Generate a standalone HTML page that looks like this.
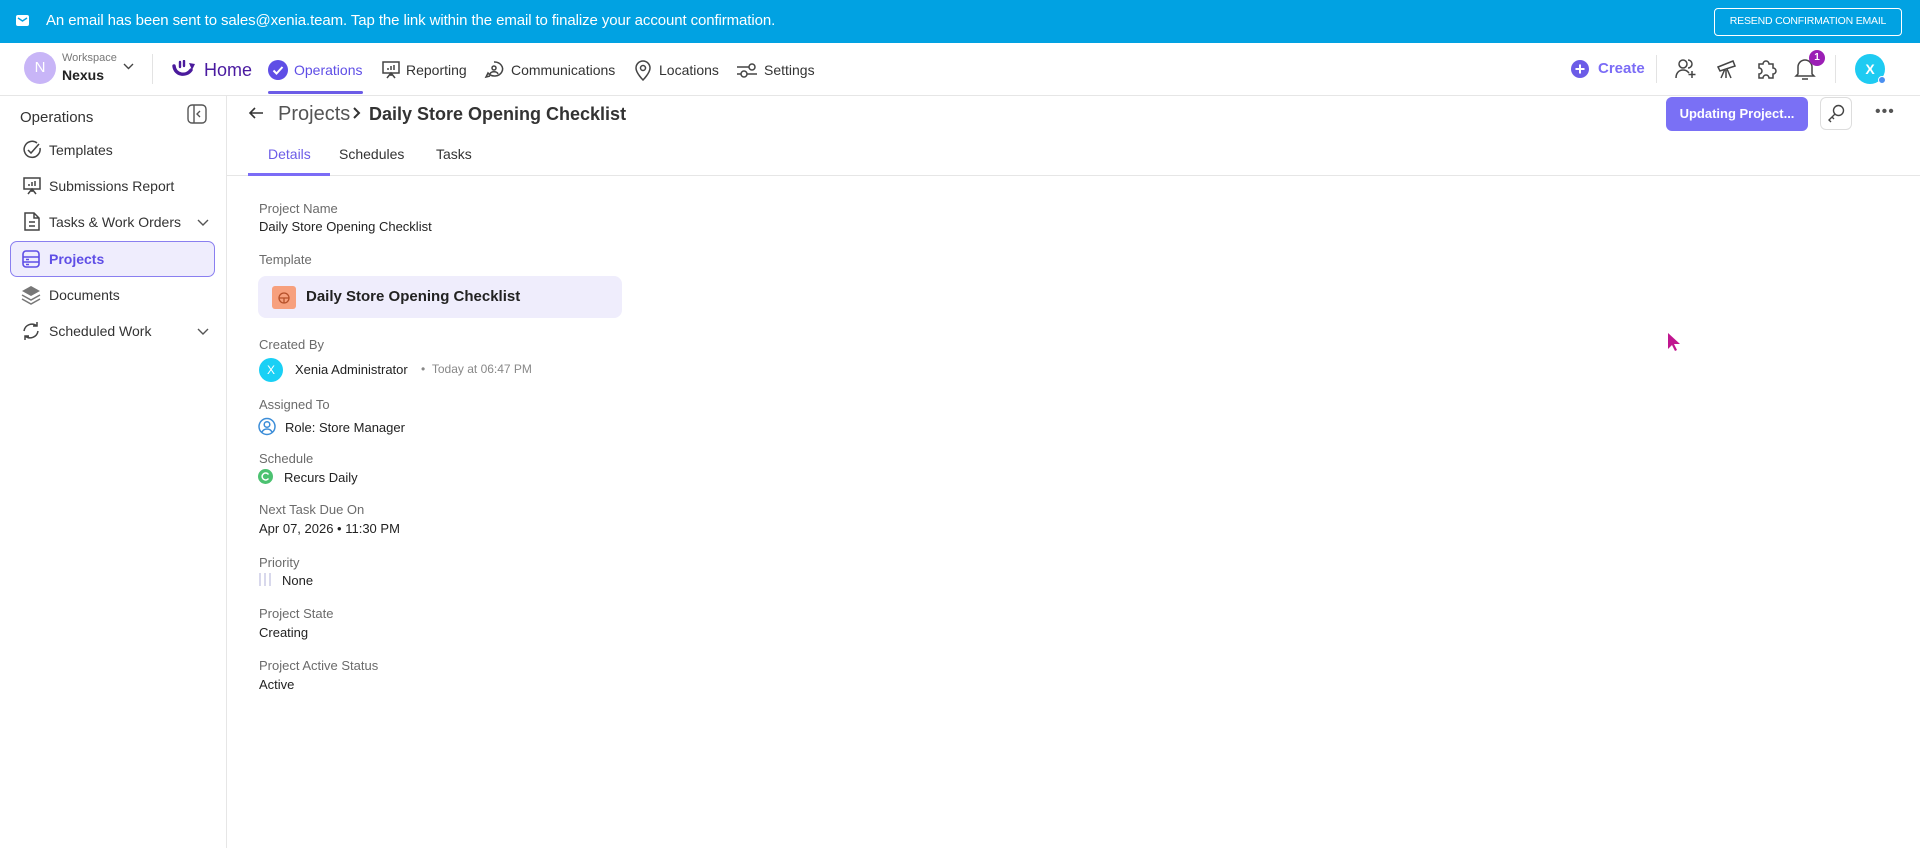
<!DOCTYPE html>
<html><head><meta charset="utf-8"><style>
*{box-sizing:border-box;margin:0;padding:0}
body{width:1920px;height:848px;overflow:hidden;background:#fff;font-family:"Liberation Sans",sans-serif;color:#222;position:relative}
.a{position:absolute;white-space:nowrap}
.banner{position:absolute;left:0;top:0;width:1920px;height:43px;background:#01a2e2}
.lbl{font-size:13px;color:#6b6b6b}
.val{font-size:13px;color:#222}
.side{font-size:14px;color:#333}
.nav{font-size:14px;color:#333}
svg{position:absolute}
</style></head><body>
<div class="banner"></div>
<svg style="left:16px;top:15px" width="13" height="11" viewBox="0 0 13 11"><rect width="13" height="11" rx="2" fill="#fff"/><path d="M2 3l4.5 3L11 3" stroke="#01a2e2" stroke-width="1.4" fill="none"/></svg>
<div class="a" style="left:46px;top:12px;font-size:15px;color:#fff;letter-spacing:-0.1px">An email has been sent to sales@xenia.team. Tap the link within the email to finalize your account confirmation.</div>
<div class="a" style="left:1714px;top:8px;width:188px;height:28px;border:1.5px solid #fff;border-radius:4px;color:#fff;font-size:10.5px;line-height:25px;text-align:center;letter-spacing:-0.2px">RESEND CONFIRMATION EMAIL</div>

<!-- nav -->
<div class="a" style="left:0;top:95px;width:1920px;height:1px;background:#e6e6e6"></div>
<div class="a" style="left:24px;top:52px;width:32px;height:32px;border-radius:50%;background:#c8b5f7;color:#fff;font-size:15px;text-align:center;line-height:32px">N</div>
<div class="a" style="left:62px;top:52px;font-size:11px;color:#777">Workspace</div>
<div class="a" style="left:62px;top:67px;font-size:14px;font-weight:bold;color:#222">Nexus</div>
<svg style="left:123px;top:63px" width="11" height="7"><path d="M1 1l4.5 4.5L10 1" stroke="#444" stroke-width="1.4" fill="none"/></svg>
<div class="a" style="left:152px;top:54px;width:1px;height:30px;background:#e3e3e3"></div>
<svg style="left:171px;top:60px" width="28" height="20" viewBox="0 0 28 20"><path d="M3 6c1 9 12 11 17 4" stroke="#4a1a9c" stroke-width="3.4" fill="none" stroke-linecap="round"/><path d="M18 3l6 1-3 6z" fill="#4a1a9c"/><path d="M9 2v5M13 1v5" stroke="#4a1a9c" stroke-width="2.4" stroke-linecap="round"/></svg>
<div class="a" style="left:204px;top:60px;font-size:18px;color:#4a1aa0">Home</div>
<svg style="left:268px;top:60px" width="20" height="20"><circle cx="10" cy="10" r="10" fill="#5f4ee6"/><path d="M5.5 10.5l3 3 6-6.5" stroke="#fff" stroke-width="2" fill="none"/></svg>
<div class="a nav" style="left:294px;top:62px;color:#5f4ee6">Operations</div>
<div class="a" style="left:268px;top:91px;width:95px;height:3px;background:#6c5ce7;border-radius:2px"></div>
<svg style="left:381px;top:60px" width="20" height="20" fill="none" stroke="#444" stroke-width="1.5"><rect x="2" y="2" width="16" height="11"/><path d="M7 10V8M10 10V6M13 10V5M10 13v3M6 18l4-5 4 5"/></svg>
<div class="a nav" style="left:406px;top:62px">Reporting</div>
<svg style="left:484px;top:60px" width="21" height="21" fill="none" stroke="#444" stroke-width="1.5"><path d="M10 2a8 7 0 1 1-6 11l-2 4 4-1"/><circle cx="10" cy="8" r="2"/><path d="M6 14c1-3 7-3 8 0"/></svg>
<div class="a nav" style="left:511px;top:62px">Communications</div>
<svg style="left:634px;top:59px" width="18" height="22" fill="none" stroke="#444" stroke-width="1.5"><path d="M9 21s-7-7-7-12a7 7 0 0 1 14 0c0 5-7 12-7 12z"/><circle cx="9" cy="9" r="2.5"/></svg>
<div class="a nav" style="left:659px;top:62px">Locations</div>
<svg style="left:736px;top:62px" width="22" height="16" fill="none" stroke="#444" stroke-width="1.5"><path d="M1 5h12M1 12h4"/><circle cx="16" cy="5" r="3"/><circle cx="8" cy="12" r="3"/><path d="M11 12h10"/></svg>
<div class="a nav" style="left:764px;top:62px">Settings</div>

<svg style="left:1571px;top:60px" width="18" height="18"><circle cx="9" cy="9" r="9" fill="#6c5ce7"/><path d="M9 4.5v9M4.5 9h9" stroke="#fff" stroke-width="2"/></svg>
<div class="a" style="left:1598px;top:60px;font-size:15px;font-weight:bold;color:#7b6cf6">Create</div>
<div class="a" style="left:1656px;top:55px;width:1px;height:28px;background:#e3e3e3"></div>
<svg style="left:1675px;top:58px" width="22" height="22" fill="none" stroke="#444" stroke-width="1.5"><circle cx="8" cy="6" r="4"/><path d="M1 20c0-5 3-8 7-8s5 2 6 3M17 13v7M13.5 16.5h7M13 2a4 4 0 0 1 0 8"/></svg>
<svg style="left:1715px;top:57px" width="24" height="24" fill="none" stroke="#444" stroke-width="1.5"><path d="M3 10l15-6 2 5-15 5zM10 12l-4 9M12 12l4 9M11 13v8"/></svg>
<svg style="left:1755px;top:57px" width="22" height="22" fill="none" stroke="#444" stroke-width="1.5"><path d="M4 7h4a3 3 0 1 1 6 0h4v4a3 3 0 1 1 0 6v4h-4a3 3 0 1 0-6 0H4v-4a3 3 0 1 0 0-6z"/></svg>
<svg style="left:1794px;top:57px" width="22" height="24" fill="none" stroke="#444" stroke-width="1.5"><path d="M4 17V10a7 7 0 0 1 14 0v7l2 2H2zM8 22h6"/></svg>
<div class="a" style="left:1809px;top:50px;width:16px;height:16px;border-radius:50%;background:#9b1fb5;color:#fff;font-size:10px;font-weight:bold;text-align:center;line-height:16px">1</div>
<div class="a" style="left:1835px;top:55px;width:1px;height:28px;background:#e3e3e3"></div>
<div class="a" style="left:1855px;top:54px;width:30px;height:30px;border-radius:50%;background:#1ecbf2;color:#fff;font-size:14px;font-weight:bold;text-align:center;line-height:30px">X</div>
<div class="a" style="left:1878px;top:76px;width:8px;height:8px;border-radius:50%;background:#4a8ff0;border:1px solid #fff"></div>

<!-- sidebar -->
<div class="a" style="left:226px;top:96px;width:1px;height:752px;background:#e6e6e6"></div>
<div class="a" style="left:20px;top:109px;font-size:15px;color:#333">Operations</div>
<svg style="left:187px;top:104px" width="20" height="20" fill="none" stroke="#555" stroke-width="1.4"><rect x="1" y="1" width="18" height="18" rx="4"/><path d="M7 1v18M13 7l-3 3 3 3"/></svg>
<svg style="left:22px;top:140px" width="20" height="20" fill="none" stroke="#444" stroke-width="1.5"><path d="M18 8a8 8 0 1 1-3-5"/><path d="M6 10l3 3 8-9"/></svg>
<div class="a side" style="left:49px;top:142px">Templates</div>
<svg style="left:22px;top:176px" width="20" height="20" fill="none" stroke="#444" stroke-width="1.5"><rect x="2" y="2" width="16" height="11"/><path d="M7 10V8M10 10V6M13 10V5M10 13v3M6 18l4-5 4 5"/></svg>
<div class="a side" style="left:49px;top:178px">Submissions Report</div>
<svg style="left:23px;top:211px" width="18" height="21" fill="none" stroke="#444" stroke-width="1.5"><path d="M2 2h9l5 5v12H2zM11 2v5h5M6 11h6M6 15h6"/></svg>
<div class="a side" style="left:49px;top:214px">Tasks &amp; Work Orders</div>
<svg style="left:197px;top:219px" width="12" height="7"><path d="M1 1l5 5 5-5" stroke="#555" stroke-width="1.4" fill="none"/></svg>
<div class="a" style="left:10px;top:241px;width:205px;height:36px;border:1.5px solid #8a7ff0;border-radius:7px;background:#efedfd"></div>
<svg style="left:21px;top:249px" width="20" height="20" fill="none" stroke="#5f4ee6" stroke-width="1.6"><rect x="2" y="2" width="16" height="16" rx="3"/><path d="M2 8h16M2 13h16M5 10.5h3M5 15.5h3"/></svg>
<div class="a side" style="left:49px;top:251px;color:#5f4ee6;font-weight:bold">Projects</div>
<svg style="left:21px;top:285px" width="20" height="20" fill="#777"><path d="M10 1l9 5-9 5-9-5z"/><path d="M1 10l9 5 9-5M1 14l9 5 9-5" stroke="#777" stroke-width="1.5" fill="none"/></svg>
<div class="a side" style="left:49px;top:287px">Documents</div>
<svg style="left:21px;top:321px" width="20" height="20" fill="none" stroke="#444" stroke-width="1.5"><path d="M16 5a8 8 0 0 0-13 5M4 15a8 8 0 0 0 13-5M16 1v4h-4M4 19v-4h4"/></svg>
<div class="a side" style="left:49px;top:323px">Scheduled Work</div>
<svg style="left:197px;top:328px" width="12" height="7"><path d="M1 1l5 5 5-5" stroke="#555" stroke-width="1.4" fill="none"/></svg>

<!-- header -->
<svg style="left:248px;top:105px" width="16" height="16" fill="none" stroke="#333" stroke-width="1.6"><path d="M15 8H2M7 3L2 8l5 5"/></svg>
<div class="a" style="left:278px;top:103px;font-size:20px;color:#555">Projects</div>
<svg style="left:353px;top:107px" width="8" height="12" fill="none" stroke="#333" stroke-width="2"><path d="M1 1l5 5-5 5"/></svg>
<div class="a" style="left:369px;top:104px;font-size:18px;font-weight:bold;color:#333">Daily Store Opening Checklist</div>
<div class="a" style="left:1666px;top:97px;width:142px;height:34px;border-radius:6px;background:#7a70f5;color:#fff;font-size:13px;font-weight:bold;text-align:center;line-height:34px">Updating Project...</div>
<div class="a" style="left:1820px;top:97px;width:32px;height:33px;border-radius:6px;border:1px solid #ddd"></div>
<svg style="left:1827px;top:104px" width="18" height="19" fill="none" stroke="#444" stroke-width="1.4"><circle cx="11.5" cy="6.5" r="5"/><path d="M8 10l-6 6 2 2M5 13l2 2"/></svg>
<div class="a" style="left:1875px;top:103px;font-size:16px;color:#555;letter-spacing:1px">•••</div>
<div class="a" style="left:268px;top:146px;font-size:14px;color:#6c5ce7">Details</div>
<div class="a" style="left:339px;top:146px;font-size:14px;color:#333">Schedules</div>
<div class="a" style="left:436px;top:146px;font-size:14px;color:#333">Tasks</div>
<div class="a" style="left:227px;top:175px;width:1693px;height:1px;background:#e6e6e6"></div>
<div class="a" style="left:248px;top:173px;width:82px;height:3px;background:#7b6cf6"></div>

<!-- content -->
<div class="a lbl" style="left:259px;top:201px">Project Name</div>
<div class="a val" style="left:259px;top:219px">Daily Store Opening Checklist</div>
<div class="a lbl" style="left:259px;top:252px">Template</div>
<div class="a" style="left:258px;top:276px;width:364px;height:42px;border-radius:8px;background:#efedfc"></div>
<div class="a" style="left:272px;top:286px;width:24px;height:23px;border-radius:3px;background:#f7a07d"></div>
<svg style="left:278px;top:292px" width="12" height="12" fill="none" stroke="#b5502a" stroke-width="1.3"><circle cx="6" cy="6" r="5"/><path d="M1 6h10M6 6v5"/></svg>
<div class="a" style="left:306px;top:288px;font-size:15px;font-weight:bold;color:#222">Daily Store Opening Checklist</div>
<div class="a lbl" style="left:259px;top:337px">Created By</div>
<div class="a" style="left:259px;top:358px;width:24px;height:24px;border-radius:50%;background:#19d0f5;color:#fff;font-size:12px;text-align:center;line-height:24px">X</div>
<div class="a val" style="left:295px;top:362px">Xenia Administrator</div>
<div class="a" style="left:421px;top:362px;font-size:12px;color:#888">•&nbsp;&nbsp;Today at 06:47 PM</div>
<div class="a lbl" style="left:259px;top:397px">Assigned To</div>
<svg style="left:258px;top:417px" width="18" height="19" fill="none" stroke="#3c8dd8" stroke-width="1.5"><circle cx="9" cy="9.5" r="8"/><circle cx="9" cy="7.5" r="2.8"/><path d="M4 15c2-4 8-4 10 0"/></svg>
<div class="a val" style="left:285px;top:420px">Role: Store Manager</div>
<div class="a lbl" style="left:259px;top:451px">Schedule</div>
<svg style="left:258px;top:469px" width="15" height="15"><circle cx="7.5" cy="7.5" r="7.5" fill="#4cc271"/><path d="M10.5 5.5a3.5 3.5 0 1 0 0 4" stroke="#fff" stroke-width="1.5" fill="none"/></svg>
<div class="a val" style="left:284px;top:470px">Recurs Daily</div>
<div class="a lbl" style="left:259px;top:502px">Next Task Due On</div>
<div class="a val" style="left:259px;top:521px">Apr 07, 2026 • 11:30 PM</div>
<div class="a lbl" style="left:259px;top:555px">Priority</div>
<div class="a" style="left:259px;top:573px;width:2px;height:13px;background:#d8d8ec"></div>
<div class="a" style="left:264px;top:573px;width:2px;height:13px;background:#d8d8ec"></div>
<div class="a" style="left:269px;top:573px;width:2px;height:13px;background:#d8d8ec"></div>
<div class="a val" style="left:282px;top:573px">None</div>
<div class="a lbl" style="left:259px;top:606px">Project State</div>
<div class="a val" style="left:259px;top:625px">Creating</div>
<div class="a lbl" style="left:259px;top:658px">Project Active Status</div>
<div class="a val" style="left:259px;top:677px">Active</div>

<svg style="left:1667px;top:332px" width="14" height="20"><path d="M1 1v16l4-4 3 6 2-1-3-6h6z" fill="#c0168f"/></svg>
</body></html>
